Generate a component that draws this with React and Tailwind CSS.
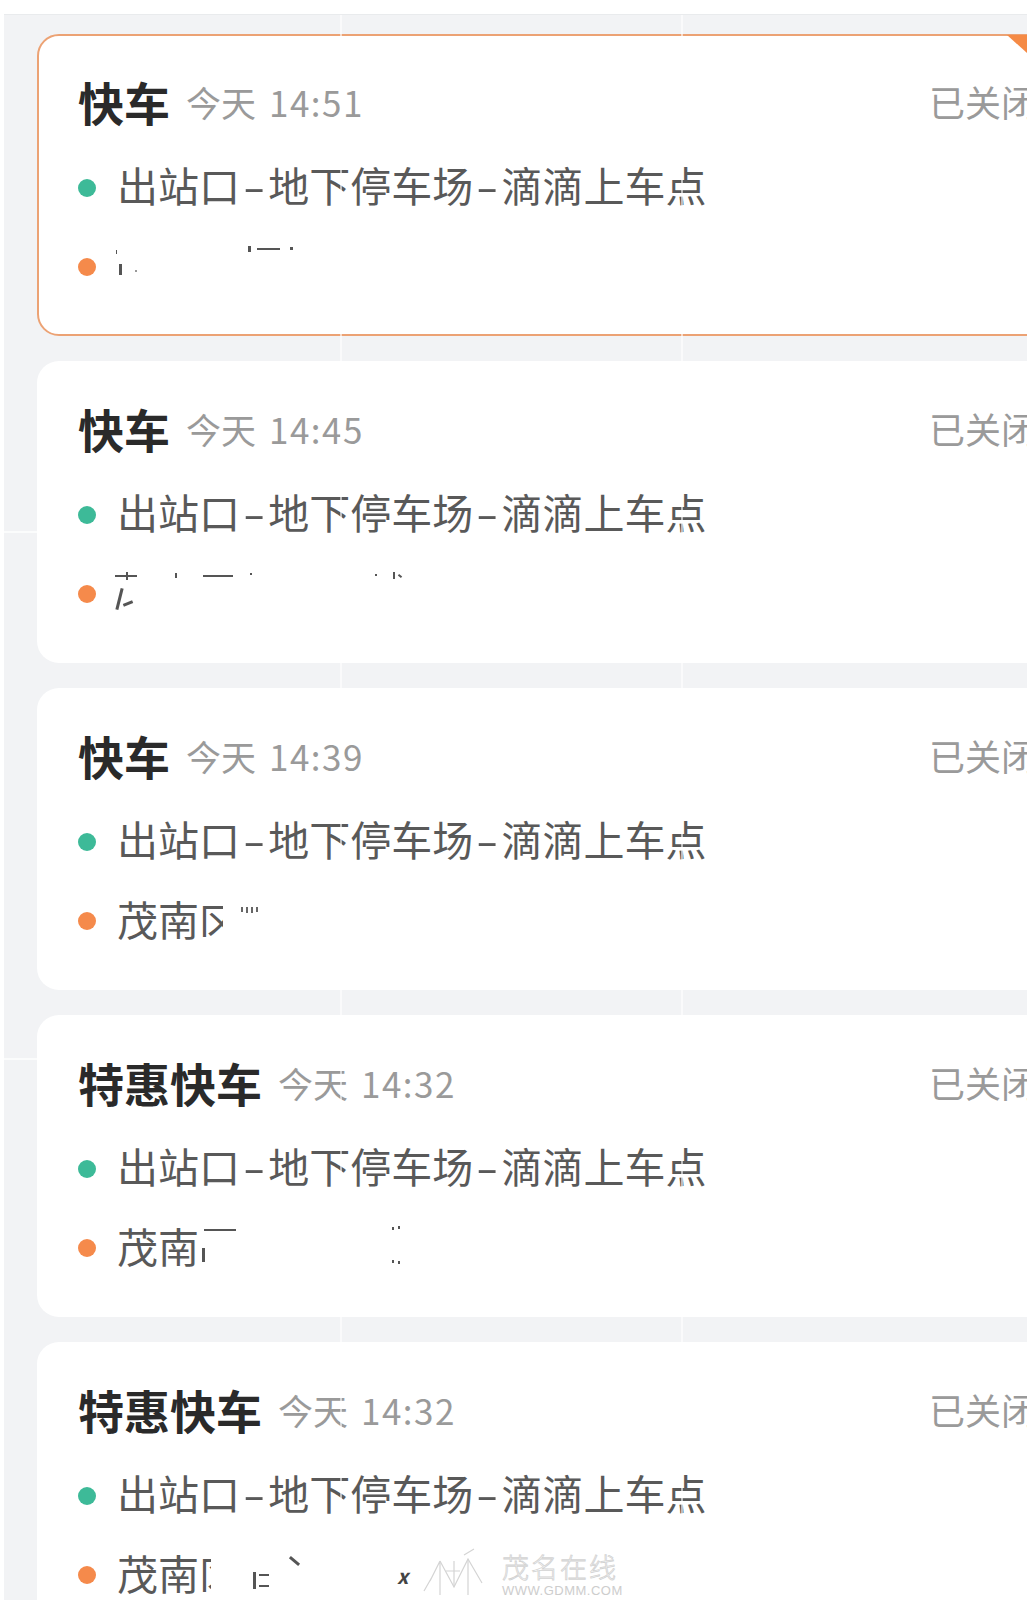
import React from "react";

const Bit = ({ l, t, w, h, r = 0, c = "bg-[#555]" }) => (
  <div
    className={`absolute ${c}`}
    style={{ left: l, top: t, width: w, height: h, transform: r ? `rotate(${r}deg)` : undefined }}
  />
);

const Dash = () => <span className="inline-block mx-[7px] scale-x-[1.6]">-</span>;

function Route() {
  return (
    <span className="text-[41px] leading-none text-[#595959] whitespace-nowrap">
      出站口<Dash />地下停车场<Dash />滴滴上车点
    </span>
  );
}

const txt = "text-[41px] leading-none text-[#595959] whitespace-nowrap";

function Dest({ variant }) {
  if (variant === 1) {
    return (
      <div className="relative w-[300px] h-[46px]">
        <Bit l={-1} t={6} w={1} h={4} />
        <Bit l={2} t={20} w={3} h={11} />
        <Bit l={18} t={26} w={2} h={2} c="bg-[#999]" />
        <Bit l={131} t={2} w={3} h={6} />
        <Bit l={140} t={4} w={23} h={2} />
        <Bit l={173} t={3} w={3} h={3} />
      </div>
    );
  }
  if (variant === 2) {
    return (
      <div className="relative w-[300px] h-[46px]">
        <Bit l={-2} t={4} w={22} h={2} />
        <Bit l={9} t={1} w={2} h={8} />
        <Bit l={58} t={2} w={2} h={5} />
        <Bit l={86} t={4} w={30} h={2} />
        <Bit l={133} t={2} w={2} h={2} />
        <Bit l={258} t={3} w={2} h={2} />
        <Bit l={276} t={1} w={2} h={7} />
        <Bit l={281} t={4} w={4} h={2} r={40} />
        <Bit l={1} t={17} w={3} h={22} r={14} />
        <Bit l={6} t={31} w={10} h={3} r={-22} />
      </div>
    );
  }
  if (variant === 3) {
    return (
      <div className="flex items-center pb-[5px]">
        <span className={txt}>茂南</span>
        <span className="inline-block w-[24px] h-[36px] overflow-hidden">
          <span className={txt}>区</span>
        </span>
        <span className="ml-[18px] flex gap-[3px] items-start h-[40px] pt-[8px]">
          <span className="w-[2px] h-[5px] bg-[#666]" />
          <span className="w-[2px] h-[6px] bg-[#666]" />
          <span className="w-[2px] h-[6px] bg-[#666]" />
          <span className="w-[2px] h-[5px] bg-[#666]" />
        </span>
      </div>
    );
  }
  if (variant === 4) {
    return (
      <div className="flex items-center pb-[5px]">
        <span className={txt}>茂南</span>
        <div className="relative w-[300px] h-[46px]">
          <Bit l={3} t={25} w={3} h={14} />
          <Bit l={5} t={6} w={32} h={2} />
          <Bit l={193} t={4} w={2} h={3} />
          <Bit l={199} t={3} w={2} h={3} />
          <Bit l={193} t={37} w={2} h={3} />
          <Bit l={199} t={38} w={2} h={3} />
        </div>
      </div>
    );
  }
  return (
    <div className="flex items-center pb-[5px]">
      <span className={txt}>茂南</span>
      <span className="inline-block w-[12px] h-[38px] overflow-hidden">
        <span className={txt}>区</span>
      </span>
      <div className="relative w-[300px] h-[46px]">
        <Bit l={42} t={22} w={3} h={17} />
        <Bit l={48} t={24} w={10} h={2} />
        <Bit l={48} t={35} w={10} h={2} />
        <Bit l={82} t={5} w={3} h={12} r={-50} />
        <span className="absolute left-[186px] top-[16px] text-[20px] font-bold italic text-[#444] leading-none">x</span>
      </div>
    </div>
  );
}

const cards = [
  { title: "快车", d: "今天", t: "14:51", active: true, dest: 1 },
  { title: "快车", d: "今天", t: "14:45", dest: 2 },
  { title: "快车", d: "今天", t: "14:39", dest: 3 },
  { title: "特惠快车", d: "今天", t: "14:32", dest: 4 },
  { title: "特惠快车", d: "今天", t: "14:32", dest: 5 },
];

function Card({ c }) {
  return (
    <div
      className={`relative w-[1040px] h-[302px] mb-[25px] rounded-[22px] bg-white border-2 pl-[39px] pt-[42px] pr-[38px] flex flex-col ${
        c.active ? "border-[#eca274]" : "border-transparent"
      }`}
    >
      {c.active && (
        <div className="absolute left-[968px] top-[-1px] w-[20px] h-[18px] bg-[#f58a45] [clip-path:polygon(0_0,100%_0,100%_100%)]" />
      )}
      <div className="flex items-center h-[46px]">
        <span className="text-[46px] leading-none font-bold text-[#2a2a2a] whitespace-nowrap">{c.title}</span>
        <span className="ml-[16px] text-[35px] leading-none text-[#9a9a9a] whitespace-nowrap">
          {c.d}
          <span className="ml-[13px] tracking-[1.5px]">{c.t}</span>
        </span>
        <span className="ml-auto text-[36px] leading-none text-[#9a9a9a] whitespace-nowrap">已关闭</span>
      </div>
      <div className="flex items-center h-[46px] mt-[41px]">
        <div className="w-[18px] h-[18px] rounded-full bg-[#3dba98] shrink-0" />
        <div className="ml-[21px] pb-[5px]">
          <Route />
        </div>
      </div>
      <div className="flex items-center h-[46px] mt-[33px]">
        <div className="w-[18px] h-[18px] rounded-full bg-[#f58a4b] shrink-0" />
        <div className="ml-[21px]">
          <Dest variant={c.dest} />
        </div>
      </div>
    </div>
  );
}

function Watermark() {
  return (
    <div className="absolute left-[416px] top-[1532px] flex items-start gap-[14px] pointer-events-none">
      <svg width="68" height="50" viewBox="0 0 68 50" fill="none" stroke="#d4d4d4" strokeWidth="1.2">
        <path d="M4 44 L12 30 M10 34 L20 14 M20 14 L20 48" />
        <path d="M20 14 L34 40 L48 12 L62 36" />
        <path d="M34 40 L34 14 M48 12 L48 48" />
        <path d="M26 24 L40 24 M44 8 L54 2" />
      </svg>
      <div className="flex flex-col pt-[6px]">
        <span className="text-[27px] leading-none font-light tracking-[2px] text-white/0 [-webkit-text-stroke:0.8px_#d2d2d2]">茂名在线</span>
        <span className="mt-[4px] text-[13px] leading-none tracking-[0.5px] text-[#cdcdcd] font-['Liberation_Sans',sans-serif]">WWW.GDMM.COM</span>
      </div>
    </div>
  );
}

export default function App() {
  return (
    <div className="w-[1031px] h-[1605px] bg-white pt-[14px] px-[4px] pb-[5px] font-['Noto_Sans_CJK_SC','Noto_Sans',sans-serif]">
      <div className="relative h-full bg-[#f2f3f5] overflow-hidden pl-[33px] pt-[19px] border-t border-[#e9ebed]">
        {cards.map((c, i) => (
          <Card key={i} c={c} />
        ))}
        <div className="absolute left-[336px] top-0 bottom-0 w-[2px] bg-white/60" />
        <div className="absolute left-[677px] top-0 bottom-0 w-[2px] bg-white/60" />
        <div className="absolute left-0 top-[516px] w-[33px] h-[2px] bg-white/70" />
        <div className="absolute left-0 top-[1043px] w-[33px] h-[2px] bg-white/70" />
        <Watermark />
      </div>
    </div>
  );
}
